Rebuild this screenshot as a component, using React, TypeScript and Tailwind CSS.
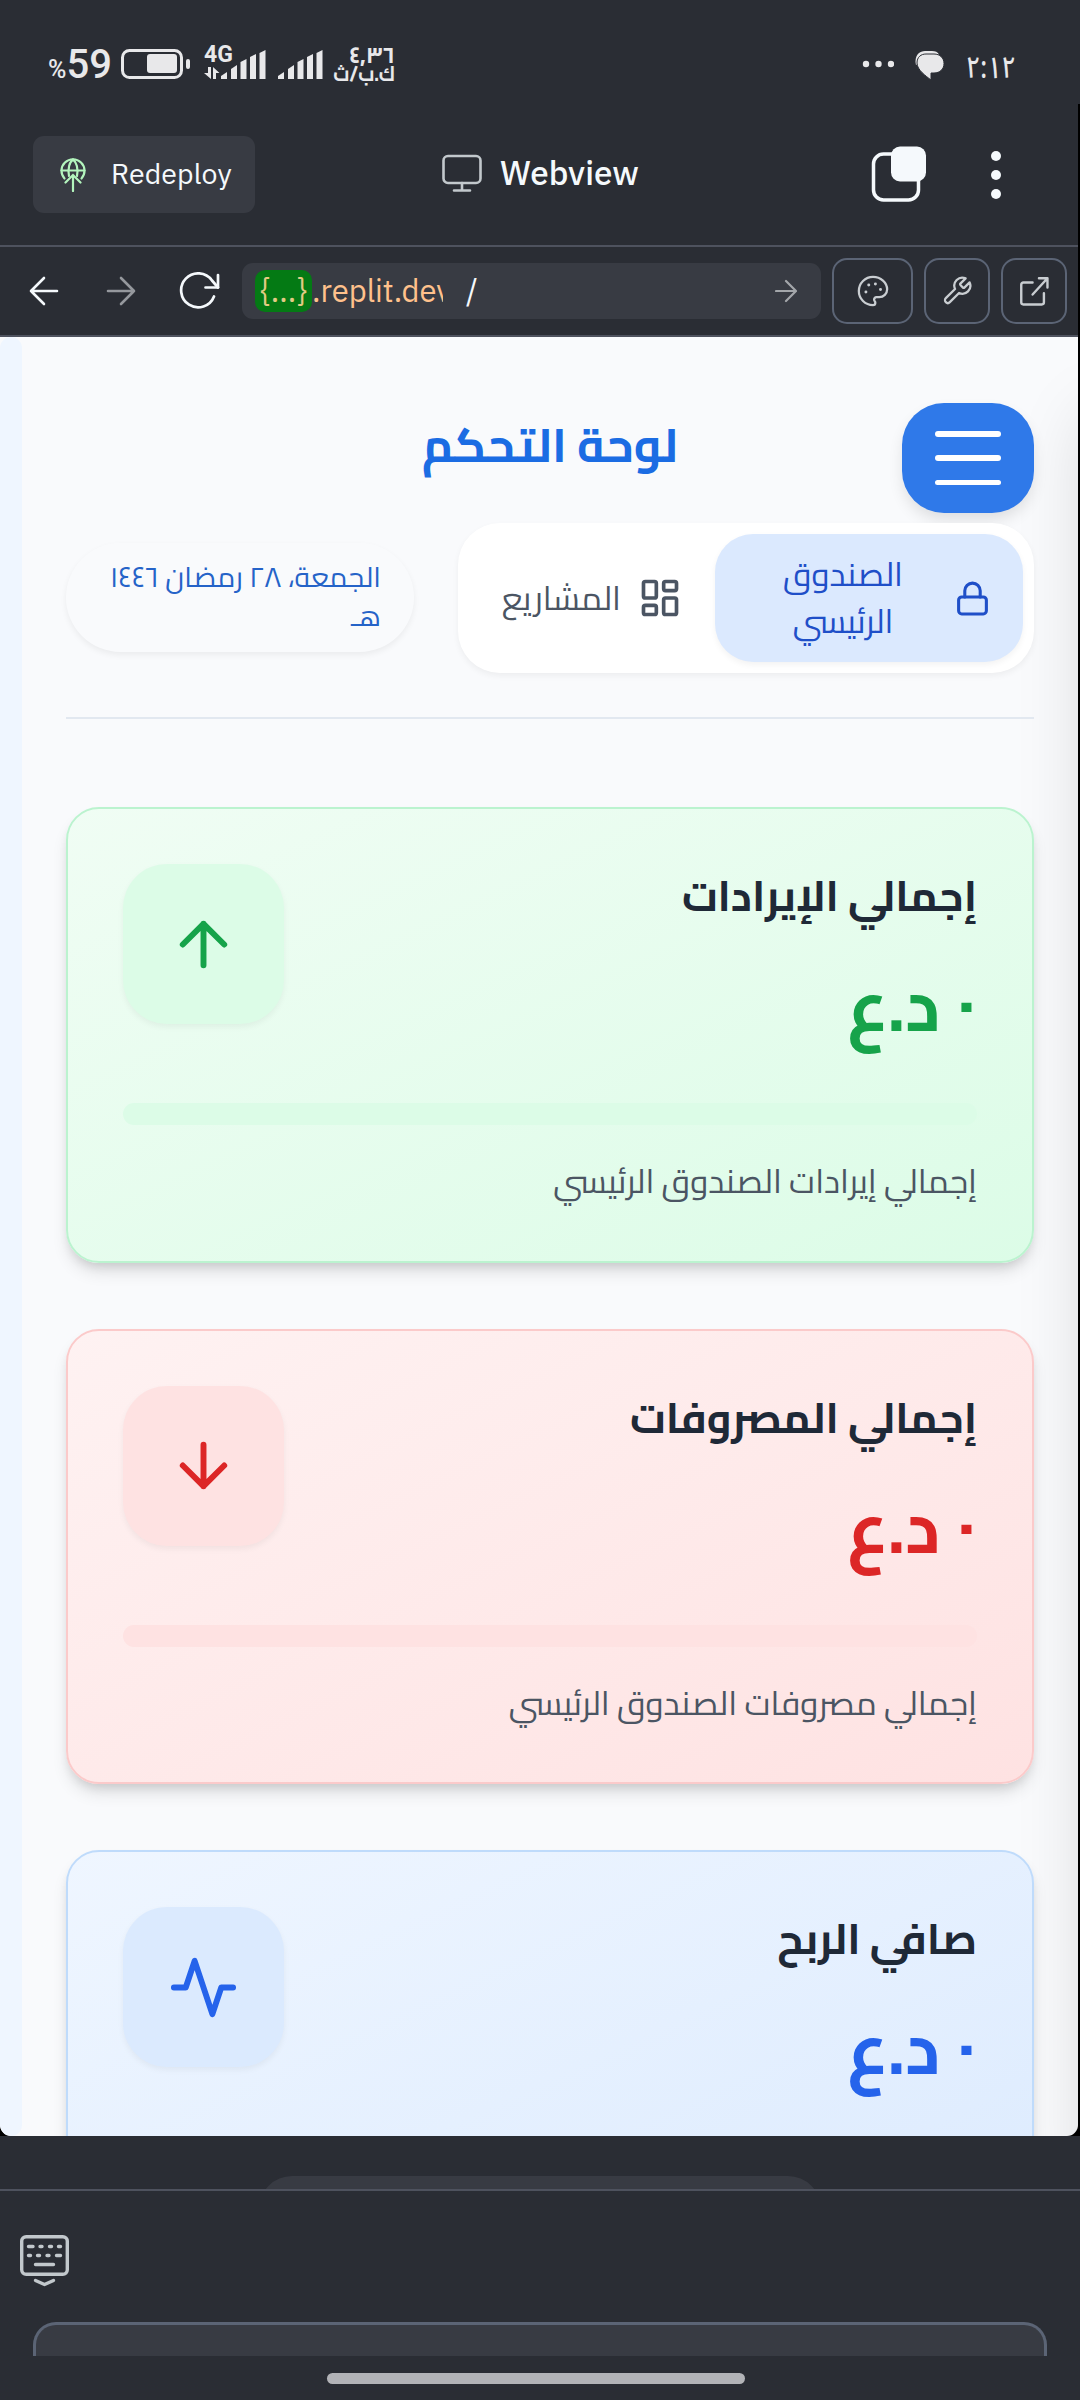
import type { ReactNode } from "react";

const plex = "font-['IBM_Plex_Sans','Noto_Sans',sans-serif]";
const cairo = "font-[Cairo,'Noto_Sans_Arabic','DejaVu_Sans',sans-serif]";

function SignalBars() {
  return (
    <svg width="46" height="32" viewBox="0 0 46 32" fill="#e8e8ea">
      <path d="M1 30V27L7 23V30Z" />
      <path d="M11 30V20L17 16V30Z" />
      <path d="M20.500 30V13L26.500 10V30Z" />
      <path d="M30 30V8L36 5V30Z" />
      <path d="M39.500 30V4L45.500 1V30Z" />
    </svg>
  );
}

function StatusBar() {
  return (
    <div className="flex h-[104px] items-start justify-between pt-[43px] pr-[64px] pl-[48px] text-[#e8e8ea]">
      <div className="flex items-start">
        <div className="mt-[1px] flex h-[42px] w-[65px] items-baseline font-[Roboto,sans-serif] leading-[42px] font-medium">
          <span className="text-[25px]">%</span>
          <span className="text-[40px]">59</span>
        </div>
        <svg className="mt-[6px] ml-[8px]" width="70" height="31" viewBox="0 0 70 31" fill="none">
          <rect x="1.500" y="1.500" width="59" height="27" rx="7" stroke="#e8e8ea" strokeWidth="3" />
          <rect x="26" y="5" width="30" height="19" rx="3" fill="#e8e8ea" />
          <rect x="65" y="10" width="4" height="10" rx="2" fill="#e8e8ea" />
        </svg>
        <div className="ml-[13px] flex w-[62px] items-start">
          <div className="relative z-10 -mr-[15px] flex w-[31px] shrink-0 flex-col">
            <span className="font-[Roboto,sans-serif] text-[23px] leading-[24px] font-bold">4G</span>
            <svg width="16" height="12" viewBox="0 0 16 12" fill="#e8e8ea">
              <path d="M4 0H7V12L0 6H4Z" />
              <path d="M9 0L15.500 6H12V12H9Z" />
            </svg>
          </div>
          <div className="mt-[6px]">
            <SignalBars />
          </div>
        </div>
        <div className="mt-[6px] ml-[11px]">
          <SignalBars />
        </div>
        <div dir="rtl" className={`mt-[2px] ml-[10px] flex w-[62px] flex-col leading-[20px] font-bold ${cairo}`}>
          <span className="text-[23px]">٤,٣٦</span>
          <span className="origin-right scale-x-[0.91] text-[21px] leading-[18px] whitespace-nowrap">ك.ب/ث</span>
        </div>
      </div>
      <div className="flex items-start">
        <svg className="mt-[17px]" width="32" height="8" viewBox="0 0 32 8" fill="#e8e8ea">
          <circle cx="4" cy="4" r="3.200" />
          <circle cx="16.500" cy="4" r="3.200" />
          <circle cx="29" cy="4" r="3.200" />
        </svg>
        <svg className="mt-[8px] ml-[21px]" width="29" height="29" viewBox="0 0 29 29">
          <path d="M1 14C-1 5 4 0 10 0H17C20 0 23 1 24 3.500" fill="#e8e8ea" />
          <path d="M11 3H19C25 3 29 7 29 12.500C29 18 25 22 19 22H16V29C11 25 2 19 2 12C2 6 6 3 11 3Z" fill="#e8e8ea" stroke="#2a2d34" strokeWidth="1" />
        </svg>
        <span className="mt-[6px] ml-[24px] flex w-[48px] origin-right scale-x-[0.84] justify-end font-['Noto_Sans_Arabic','DejaVu_Sans',sans-serif] text-[30px] leading-[40px] font-medium">٢:١٢</span>
      </div>
    </div>
  );
}

function Header() {
  return (
    <div className={`flex h-[143px] items-start border-b-2 border-[#4e525e] ${plex}`}>
      <div className="mt-[32px] ml-[33px] flex h-[77px] w-[222px] items-center rounded-[11px] bg-[#383b43] pl-[27px]">
        <svg width="26" height="34" viewBox="0 0 26 34" fill="none" stroke="#b3f5bd" strokeWidth="2.200" strokeLinecap="round">
          <path d="M4.500 20.500A11.500 11.500 0 1 1 21.500 20.500" />
          <path d="M1.500 12.500H24.500" />
          <path d="M9 18C7.500 11 9.500 4 13 1.500C16.500 4 18.500 11 17 18" />
          <path d="M13 33V17M5.500 24.500L13 17L20.500 24.500" />
        </svg>
        <span className="-mt-[2px] ml-[25px] text-[28.500px] leading-[40px] tracking-[0.1px] text-[#f5f9fc]">Redeploy</span>
      </div>
      <div className="mt-[45px] ml-[187px] flex w-[200px] items-center">
        <svg width="40" height="38" viewBox="0 0 40 38" fill="none" stroke="#c2c8cc" strokeWidth="2.600" strokeLinecap="round">
          <rect x="1.500" y="2" width="37" height="27" rx="4.500" />
          <path d="M20 29V36M12 36.500H28" />
        </svg>
        <span className="ml-[18px] text-[33.300px] leading-[48px] font-medium text-[#f5f9fc]">Webview</span>
      </div>
      <svg className="mt-[42px] ml-[229px]" width="56" height="56" viewBox="0 0 56 56">
        <rect x="2.500" y="9.500" width="45" height="46" rx="10" fill="none" stroke="#f5f9fc" strokeWidth="3.500" transform="translate(0 -1.500)" />
        <rect x="20" y="0.500" width="35" height="35" rx="9" fill="#f5f9fc" />
      </svg>
      <svg className="mt-[46px] ml-[63px]" width="12" height="50" viewBox="0 0 12 50" fill="#f5f9fc">
        <circle cx="6" cy="6" r="5" />
        <circle cx="6" cy="25" r="5" />
        <circle cx="6" cy="44" r="5" />
      </svg>
    </div>
  );
}

function ToolButton({ wide, children }: { wide?: boolean; children: ReactNode }) {
  return (
    <div className={`flex h-[66px] items-center justify-center rounded-[15px] border-2 border-[#5b6475] ${wide ? "w-[81px]" : "w-[66px]"}`}>
      {children}
    </div>
  );
}

function Toolbar() {
  return (
    <div className={`flex h-[90px] items-center border-b-2 border-[#4e525e] ${plex}`}>
      <svg className="ml-[29px]" width="30" height="30" viewBox="0 0 30 30" fill="none" stroke="#f5f9fc" strokeWidth="2.600" strokeLinecap="round" strokeLinejoin="round">
        <path d="M28 15H2M15 2L2 15L15 28" />
      </svg>
      <svg className="ml-[47px]" width="30" height="30" viewBox="0 0 30 30" fill="none" stroke="#95989d" strokeWidth="2.600" strokeLinecap="round" strokeLinejoin="round">
        <path d="M2 15H28M15 2L28 15L15 28" />
      </svg>
      <svg className="ml-[43px]" width="41" height="38" viewBox="0 0 41 38" fill="none" stroke="#f5f9fc" strokeWidth="2.700" strokeLinecap="round" strokeLinejoin="round">
        <path d="M35 24.500A17 17 0 1 1 33 8.500L39 15.500" />
        <path d="M39 3V15.500H26.500" />
      </svg>
      <div className="ml-[22px] flex h-[56px] w-[579px] items-center rounded-[11px] bg-[#383b43] pl-[13px] text-[31px] leading-[42px]">
        <span className="flex h-[42px] w-[57px] items-center justify-center rounded-[10px] bg-[#047a14] text-[#e3cb85]">{"{...}"}</span>
        <span className="w-[131px] overflow-hidden whitespace-nowrap text-[#ffc18c]">.replit.dev</span>
        <span className="ml-[23px] text-[#f5f9fc]">/</span>
        <svg className="mr-[24px] ml-auto" width="22" height="24" viewBox="0 0 22 24" fill="none" stroke="#a3a6aa" strokeWidth="2.200" strokeLinecap="round" strokeLinejoin="round">
          <path d="M1 12H21M11 2L21 12L11 22" />
        </svg>
      </div>
      <div className="ml-[11px] flex gap-[11px]">
        <ToolButton wide>
          <svg width="34" height="34" viewBox="0 0 24 24" fill="none" stroke="#c9cdd1" strokeWidth="1.600" strokeLinejoin="round">
            <path d="M12 2C6.500 2 2 6.500 2 12s4.500 10 10 10c.926 0 1.648-.746 1.648-1.688 0-.437-.18-.835-.437-1.125-.29-.289-.438-.652-.438-1.125a1.640 1.640 0 0 1 1.668-1.668h1.996c3.051 0 5.555-2.503 5.555-5.554C21.965 6.012 17.461 2 12 2z" />
            <g fill="#c9cdd1" stroke="none">
              <circle cx="9" cy="7.800" r="1.050" />
              <circle cx="13.700" cy="7" r="1.050" />
              <circle cx="17.300" cy="11" r="1.050" />
              <circle cx="7" cy="12.700" r="1.050" />
            </g>
          </svg>
        </ToolButton>
        <ToolButton>
          <svg width="32" height="32" viewBox="0 0 24 24" fill="none" stroke="#c9cdd1" strokeWidth="1.700" strokeLinejoin="round">
            <path d="M14.700 6.300a1 1 0 0 0 0 1.400l1.600 1.600a1 1 0 0 0 1.400 0l3.770-3.770a6 6 0 0 1-7.940 7.940l-6.910 6.910a2.120 2.120 0 0 1-3-3l6.910-6.910a6 6 0 0 1 7.940-7.940l-3.760 3.760z" />
          </svg>
        </ToolButton>
        <ToolButton>
          <svg width="34" height="34" viewBox="0 0 24 24" fill="none" stroke="#c9cdd1" strokeWidth="1.700" strokeLinecap="round" strokeLinejoin="round">
            <path d="M19 13.500v6.500a1.500 1.500 0 0 1-1.500 1.500h-13A1.500 1.500 0 0 1 3 20V7.500A1.500 1.500 0 0 1 4.500 6H11M15.500 3H21.500V9.500M21.500 3L11 14.500" />
          </svg>
        </ToolButton>
      </div>
    </div>
  );
}

function DashboardHeader() {
  return (
    <header className="flex h-[382px] shrink-0 flex-col border-b-2 border-[#e2e8f0] pt-[66px]">
      <div className="flex h-[120px] items-start">
        <div className="flex h-[110px] w-[132px] flex-col items-center justify-between rounded-[42px] bg-[#2f79e9] py-[28px] shadow-[0_8px_16px_-2px_rgba(0,0,0,0.12)]">
          <span className="h-[5.500px] w-[66px] rounded-full bg-white" />
          <span className="h-[5.500px] w-[66px] rounded-full bg-white" />
          <span className="h-[5.500px] w-[66px] rounded-full bg-white" />
        </div>
        <h1 className="mr-[224px] text-[47.300px] leading-[84px] font-bold whitespace-nowrap text-[#1b6ce3]">لوحة التحكم</h1>
      </div>
      <div className="flex items-start justify-between">
        <nav className="flex h-[150px] w-[576px] rounded-[42px] bg-white p-[11px] shadow-[0_3px_6px_rgba(0,0,0,0.05)]">
          <div className="flex w-[308px] items-center rounded-[38px] bg-[#dbe9fe] pr-[32px] shadow-[0_3px_6px_rgba(0,0,0,0.05)]">
            <svg width="37" height="37" viewBox="0 0 24 24" fill="none" stroke="#1f4fc8" strokeWidth="2" strokeLinecap="round" strokeLinejoin="round">
              <rect x="3" y="11" width="18" height="11" rx="2" />
              <path d="M7 11V7a5 5 0 0 1 10 0v4" />
            </svg>
            <span className="mr-[37px] w-[148px] text-center text-[33px] leading-[47px] text-[#1f4fc8]">
              الصندوق
              <br />
              الرئيسي
            </span>
          </div>
          <div className="flex items-center pr-[33px]">
            <svg width="44" height="44" viewBox="0 0 24 24" fill="none" stroke="#4b5563" strokeWidth="2" strokeLinecap="round" strokeLinejoin="round">
              <rect x="3" y="3" width="7" height="9" rx="1" />
              <rect x="14" y="3" width="7" height="5" rx="1" />
              <rect x="14" y="12" width="7" height="9" rx="1" />
              <rect x="3" y="16" width="7" height="5" rx="1" />
            </svg>
            <span className="mr-[17px] text-[33px] leading-[47px] whitespace-nowrap text-[#4b5563]">المشاريع</span>
          </div>
        </nav>
        <div className="mt-[20px] h-[109px] w-[348px] rounded-full pt-[15px] pr-[33px] pl-[30px] text-[28.500px] leading-[38.500px] text-[#2563c8] shadow-[0_3px_6px_rgba(0,0,0,0.06)]">
          الجمعة، ٢٨ رمضان ١٤٤٦
          <br />
          هـ
        </div>
      </div>
    </header>
  );
}

type CardProps = {
  title: string;
  note?: string;
  frame: string;
  tint: string;
  color: string;
  icon: ReactNode;
};

function StatCard({ title, note, frame, tint, color, icon }: CardProps) {
  return (
    <section className={`h-[455.500px] shrink-0 rounded-[33px] border-2 bg-linear-to-br px-[55px] pt-[55px] shadow-[0_11px_17px_-3px_rgba(0,0,0,0.12),0_6px_11px_-4px_rgba(0,0,0,0.12)] ${frame}`}>
      <div className="flex h-[187px] items-start justify-between">
        <div>
          <h2 className="text-[42.500px] leading-[63px] font-bold text-[#1f2937]">{title}</h2>
          <p className={`mt-[34px] text-[71px] leading-[88px] font-bold ${color}`}>٠ د.ع</p>
        </div>
        <div className={`flex h-[160px] w-[161px] items-center justify-center rounded-[44px] shadow-[0_3px_6px_rgba(0,0,0,0.05)] ${tint} ${color}`}>
          <svg width="71" height="71" viewBox="0 0 24 24" fill="none" stroke="currentColor" strokeWidth="2" strokeLinecap="round" strokeLinejoin="round">
            {icon}
          </svg>
        </div>
      </div>
      <div className={`mt-[52px] h-[22px] rounded-full ${tint}`} />
      {note && <p className="mt-[34px] text-[33.100px] leading-[44px] text-[#4b5563]">{note}</p>}
    </section>
  );
}

function Webview() {
  return (
    <div className="h-[1799px] bg-black">
      <div className="relative z-0 flex h-[1799px] justify-between overflow-hidden rounded-b-[11px] bg-[#f9fafc]">
        <div className="w-[22px] rounded-full bg-[#eff6ff]" />
        <div dir="rtl" className={`mr-[44px] flex w-[968px] flex-col ${cairo}`}>
          <DashboardHeader />
          <main className="mt-[88px] flex flex-col gap-[66px]">
            <StatCard
              title="إجمالي الإيرادات"
              note="إجمالي إيرادات الصندوق الرئيسي"
              frame="border-[#bbf3cf] from-[#f0fdf4] to-[#dcfce7]"
              tint="bg-[#dcfce7]"
              color="text-[#16a34a]"
              icon={<path d="M12 19V5M5 12l7-7 7 7" />}
            />
            <StatCard
              title="إجمالي المصروفات"
              note="إجمالي مصروفات الصندوق الرئيسي"
              frame="border-[#fbcaca] from-[#fef2f2] to-[#fee2e2]"
              tint="bg-[#fee2e2]"
              color="text-[#dc2626]"
              icon={<path d="M12 5v14M19 12l-7 7-7-7" />}
            />
            <StatCard
              title="صافي الربح"
              frame="border-[#bfdbfb] from-[#eff6ff] to-[#dbeafe]"
              tint="bg-[#dbeafe]"
              color="text-[#2563eb]"
              icon={<path d="M22 12h-4l-3 9L9 3l-3 9H2" />}
            />
          </main>
        </div>
        <div className="absolute inset-y-0 left-full -z-10 w-[700px] shadow-[0_69px_66px_-10px_rgba(0,0,0,0.15)]" />
      </div>
    </div>
  );
}

function BottomArea() {
  return (
    <footer className="flex h-[264px] flex-col">
      <div className="flex h-[55px] justify-center overflow-hidden border-b-2 border-[#4e525e] pt-[40px]">
        <div className="h-[66px] w-[562px] shrink-0 rounded-full bg-[#383b43]" />
      </div>
      <div className="h-[131px] pt-[44px] pl-[20px]">
        <svg width="50" height="52" viewBox="0 0 50 52" fill="none" stroke="#c2c8cc" strokeWidth="3.400" strokeLinecap="round" strokeLinejoin="round">
          <rect x="1.700" y="1.700" width="45.600" height="37.600" rx="4.500" />
          <path d="M8.500 11.500H13M20 11.500H22M29.500 11.500H31.500M38.500 11.500H40.500M8.500 20.500H10.500M17.500 20.500H19.500M27 20.500H29M36.500 20.500H40.500M15.500 29.500H33.500" />
          <path d="M15.500 45.500L24.500 49.500L33.500 45.500" />
        </svg>
      </div>
      <div className="mr-[33px] ml-[33px] h-[34px] rounded-t-[23px] border-[3px] border-b-0 border-[#5b6475] bg-[#383b43]" />
      <div className="mt-[17px] ml-[327px] h-[11px] w-[418px] rounded-full bg-[#b2b3b7]" />
    </footer>
  );
}

export default function App() {
  return (
    <div className="h-[2400px] w-[1080px] overflow-hidden bg-[#2a2d34]">
      <StatusBar />
      <div className="flex">
        <div className="w-[1078px]">
          <Header />
          <Toolbar />
          <Webview />
        </div>
        <div className="w-[2px] bg-black" />
      </div>
      <BottomArea />
    </div>
  );
}
